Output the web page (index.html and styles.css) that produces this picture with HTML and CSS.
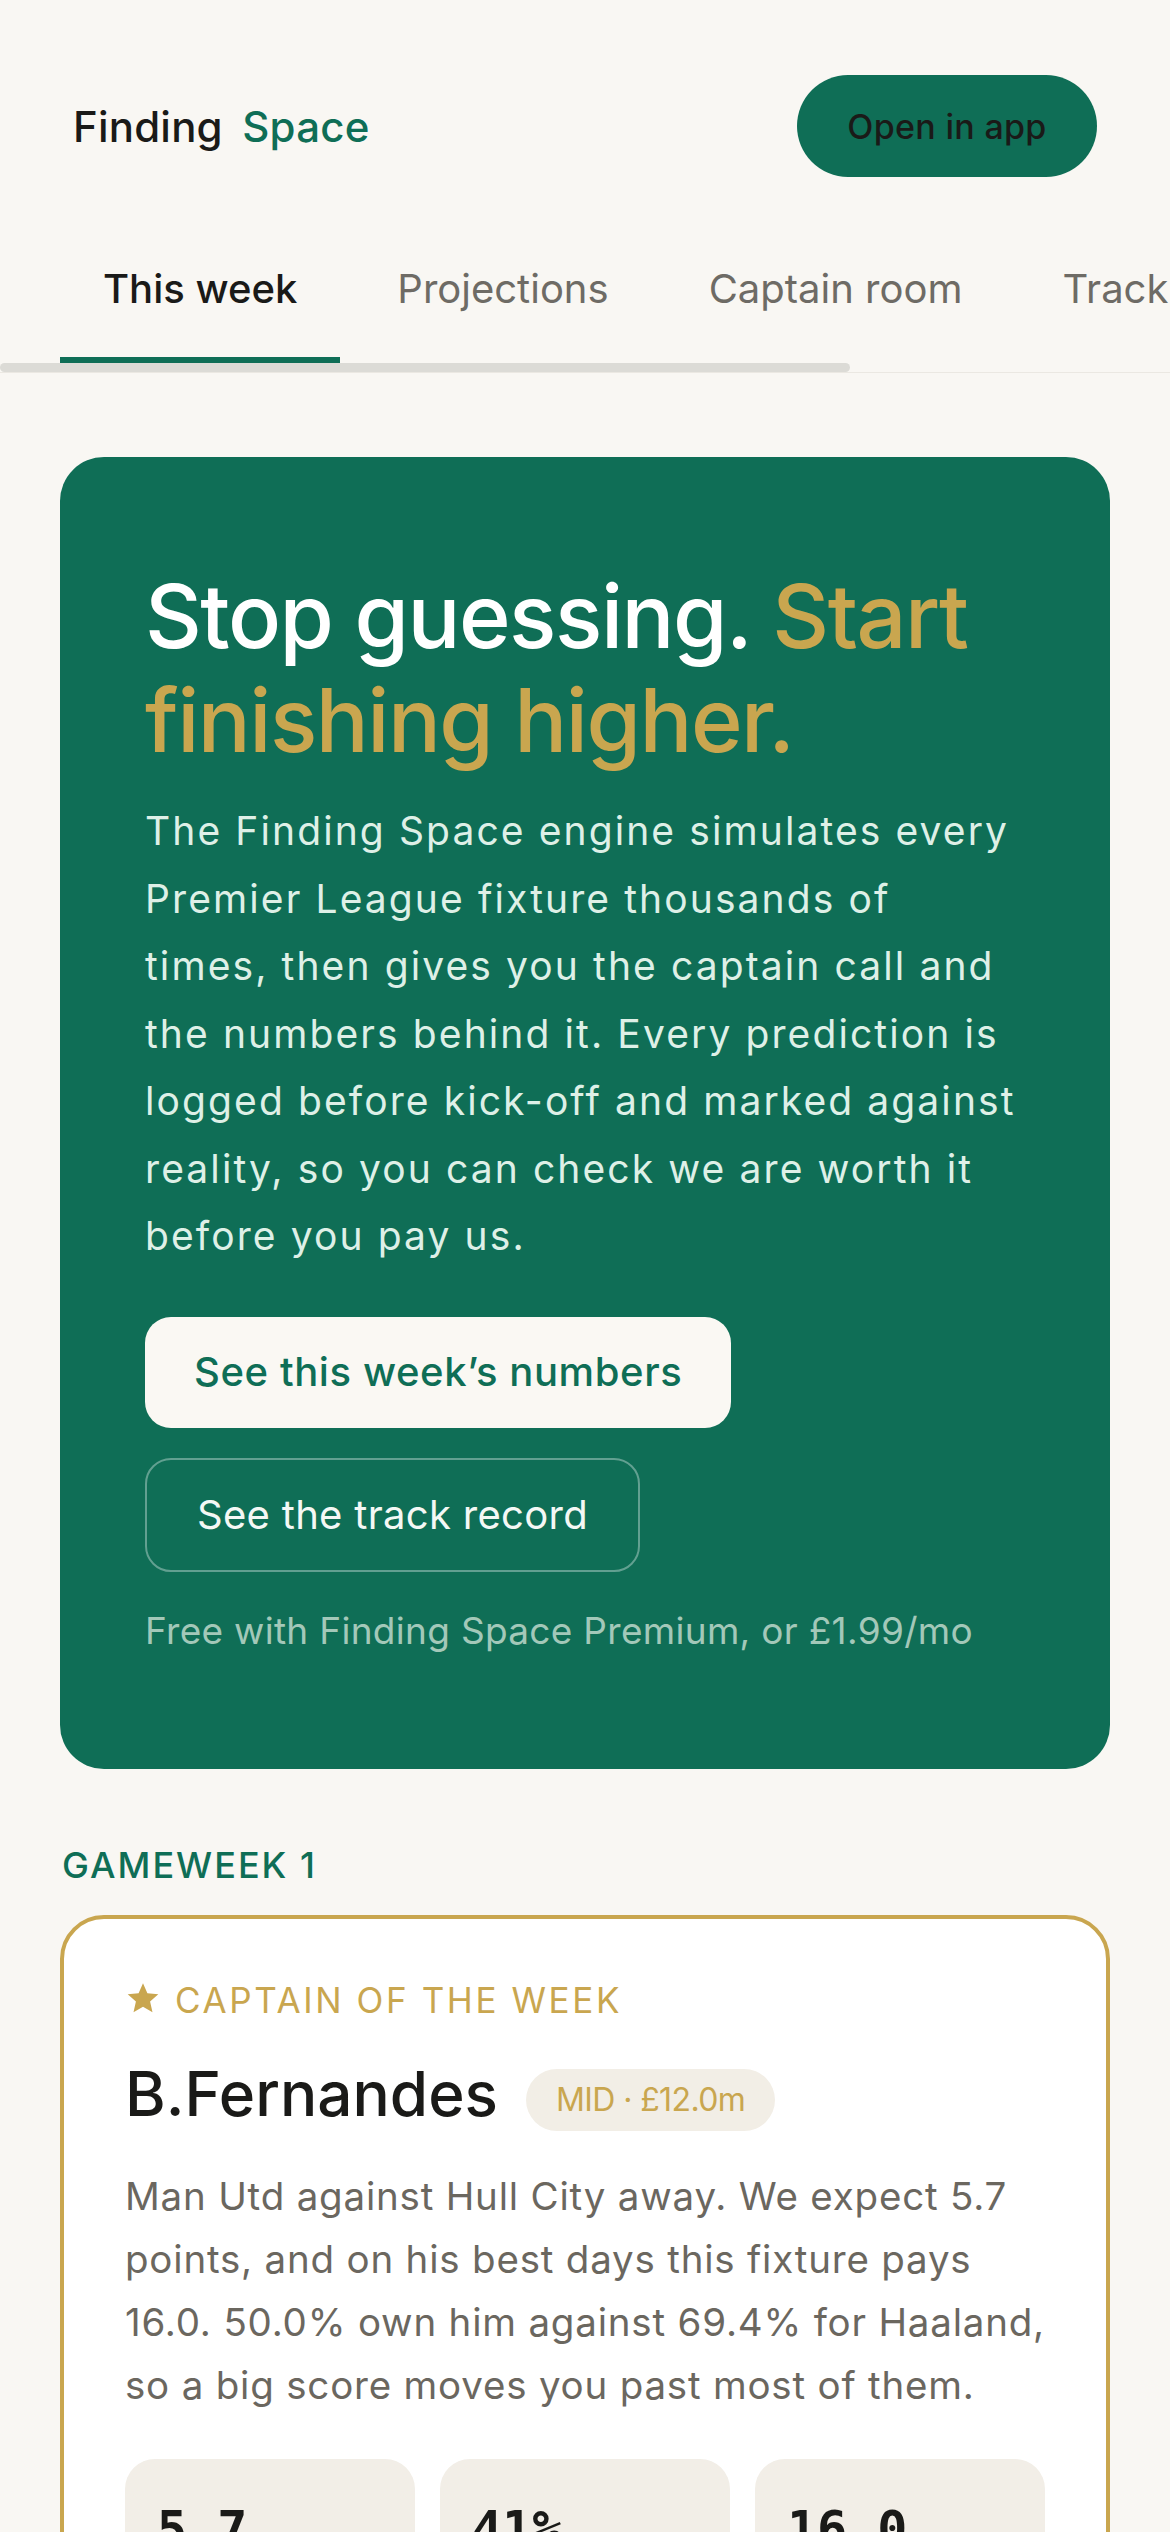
FILE: index.html
```html
<!DOCTYPE html>
<html lang="en">
<head>
  <meta charset="UTF-8">
  <title>Finding Space</title>
  <link rel="stylesheet" href="styles.css">
</head>

<body>
  <!-- Top bar -->
  <header class="topbar">
    <div class="logo"><span class="logo-dark">Finding</span> <span class="logo-green">Space</span></div>
    <a class="app-btn" href="#">Open in app</a>
  </header>

  <!-- Tabs -->
  <nav class="tabs">
    <div class="tab-row">
      <a class="tab active" href="#">This week</a>
      <a class="tab" href="#">Projections</a>
      <a class="tab" href="#">Captain room</a>
      <a class="tab" href="#">Track record</a>
    </div>
    <div class="tab-scroll"></div>
  </nav>

  <main class="page">
    <!-- Hero -->
    <section class="hero">
      <h1>Stop guessing. <span class="gold">Start finishing higher.</span></h1>
      <p class="hero-text">The Finding Space engine simulates every Premier League fixture thousands of times, then gives you the captain call and the numbers behind it. Every prediction is logged before kick-off and marked against reality, so you can check we are worth it before you pay us.</p>
      <div class="hero-actions">
        <a class="btn btn-light" href="#">See this week’s numbers</a>
        <a class="btn btn-outline" href="#">See the track record</a>
      </div>
      <p class="hero-note">Free with Finding Space Premium, or £1.99/mo</p>
    </section>

    <!-- Gameweek -->
    <h2 class="section-label">GAMEWEEK 1</h2>

    <section class="captain-card">
      <div class="captain-label">
        <svg class="star" viewBox="0 0 24 24" width="36" height="34"><path d="M12 1.5l3.1 7.2 7.7.7-5.8 5.1 1.7 7.6L12 18.1l-6.7 4 1.7-7.6L1.2 9.4l7.7-.7z" fill="#c9a64f"/></svg>
        <span>CAPTAIN OF THE WEEK</span>
      </div>
      <div class="player-row">
        <h3 class="player-name">B.Fernandes</h3>
        <span class="badge">MID · £12.0m</span>
      </div>
      <p class="player-text">Man Utd against Hull City away. We expect 5.7 points, and on his best days this fixture pays 16.0. 50.0% own him against 69.4% for Haaland, so a big score moves you past most of them.</p>
      <div class="stats">
        <div class="stat"><div class="stat-num">5.7</div><div class="stat-label">Expected points</div></div>
        <div class="stat"><div class="stat-num">41%</div><div class="stat-label">Chance of a haul</div></div>
        <div class="stat"><div class="stat-num">16.0</div><div class="stat-label">Best case</div></div>
      </div>
    </section>
  </main>
</body>
</html>
```

FILE: styles.css
```css
body {
  margin: 0;
  background-color: #f9f7f3;
  font-family: Inter, "Noto Sans", sans-serif;
  color: #1a1a18;
}
a {
  text-decoration: none;
}

/* top bar */
.topbar {
  display: flex;
  justify-content: space-between;
  align-items: center;
  padding: 75px 73px 53px 73px;
}
.logo {
  font-size: 42px;
  font-weight: 500;
  letter-spacing: 0.2px;
  word-spacing: 8px;
}
.logo-green {
  color: #0f6e56;
}
.app-btn {
  display: flex;
  align-items: center;
  justify-content: center;
  width: 300px;
  height: 102px;
  box-sizing: border-box;
  border-radius: 51px;
  background-color: #0f6e56;
  color: #1a1a18;
  font-size: 34px;
  font-weight: 500;
  letter-spacing: 0.3px;
}

/* tabs */
.tabs {
  border-bottom: 1px solid #ebe8e2;
}
.tab-row {
  display: flex;
  gap: 14px;
  padding: 0 60px;
  overflow: hidden;
  white-space: nowrap;
}
.tab {
  flex-shrink: 0;
  padding: 35px 43px 44px;
  line-height: 48px;
  font-size: 40px;
  color: #6e6b65;
  border-bottom: 6px solid transparent;
}
.tab.active {
  color: #1a1a18;
  font-weight: 500;
  border-bottom-color: #0f6e56;
}
.tab-scroll {
  width: 850px;
  height: 9px;
  border-radius: 5px;
  background-color: #dcdbd6;
}

.page {
  padding: 84px 60px 0;
}

/* hero */
.hero {
  background-color: #0f6e56;
  border-radius: 44px;
  padding: 107px 85px 113px;
}
.hero h1 {
  margin: 0;
  font-size: 88px;
  line-height: 104px;
  font-weight: 500;
  letter-spacing: -1.5px;
  color: #ffffff;
}
.gold {
  color: #c9a64f;
}
.hero-text {
  margin: 25px 0 0;
  font-size: 39px;
  line-height: 67.5px;
  letter-spacing: 2.1px;
  color: #def0e7;
}
.hero-actions {
  display: flex;
  flex-direction: column;
  align-items: flex-start;
  gap: 30px;
  margin-top: 47px;
}
.btn {
  display: block;
  font-size: 40px;
  line-height: 48px;
  border-radius: 26px;
}
.btn-light {
  padding: 31.5px 49px;
  background-color: #faf8f3;
  color: #0f6e56;
  font-weight: 500;
  letter-spacing: 0.6px;
}
.btn-outline {
  padding: 31px 50px;
  border: 2px solid rgba(255, 255, 255, 0.35);
  color: #f4f8f5;
  letter-spacing: 0.3px;
}
.hero-note {
  margin: 34px 0 0;
  font-size: 37px;
  line-height: 50px;
  letter-spacing: 0.3px;
  color: #a3c8b9;
}

/* gameweek */
.section-label {
  margin: 74px 0 28px 2px;
  font-size: 36px;
  line-height: 44px;
  font-weight: 500;
  letter-spacing: 2px;
  color: #0f6e56;
}
.captain-card {
  background-color: #ffffff;
  border: 4px solid #c9a64f;
  border-radius: 44px;
  padding: 59px 61px 60px;
}
.captain-label {
  display: flex;
  align-items: center;
  gap: 14px;
  font-size: 35px;
  line-height: 44px;
  letter-spacing: 2.6px;
  color: #c9a64f;
}
.star {
  margin-bottom: 4px;
}
.player-row {
  display: flex;
  align-items: flex-end;
  gap: 28px;
  margin-top: 35px;
}
.player-name {
  margin: 0;
  font-size: 62px;
  line-height: 74px;
  font-weight: 500;
  letter-spacing: 0;
}
.badge {
  padding: 0 30px;
  height: 62px;
  line-height: 62px;
  border-radius: 31px;
  background-color: #f2eee6;
  color: #c9a64f;
  font-size: 32px;
  letter-spacing: -0.6px;
}
.player-text {
  margin: 34px 0 0;
  font-size: 38.5px;
  line-height: 63px;
  letter-spacing: 0.8px;
  color: #6b675f;
}
.stats {
  display: grid;
  grid-template-columns: repeat(3, 1fr);
  gap: 25px;
  margin-top: 42px;
}
.stat {
  background-color: #f2eee7;
  border-radius: 30px;
  padding: 40px 32px;
}
.stat-num {
  font-family: "DejaVu Sans Mono", "Liberation Mono", monospace;
  font-weight: 700;
  font-size: 50px;
  line-height: 60px;
}
.stat-label {
  margin-top: 8px;
  font-size: 30px;
  color: #6b675f;
}
```
